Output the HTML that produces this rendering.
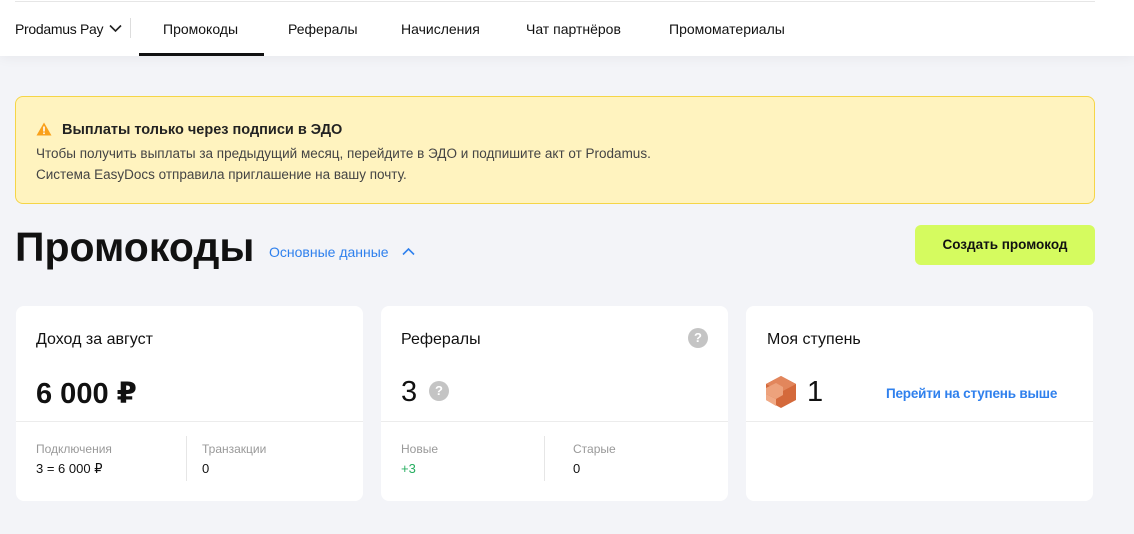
<!DOCTYPE html>
<html><head><meta charset="utf-8"><style>
*{box-sizing:border-box;margin:0;padding:0}
body{width:1134px;height:534px;background:#f3f4f8;font-family:"Liberation Sans","DejaVu Sans",sans-serif;color:#111;position:relative;overflow:hidden}
.hdr{position:absolute;left:0;top:0;width:1134px;height:56px;background:#fff;box-shadow:0 2px 12px rgba(0,0,0,0.05)}
.topline{position:absolute;left:15px;top:1px;width:1080px;height:1px;background:#e6e6e6}
.t{position:absolute;font-size:14px;white-space:nowrap}
.sep{position:absolute;left:130px;top:18px;width:1px;height:20px;background:#ddd}
.ul{position:absolute;left:139px;top:53px;width:125px;height:3px;background:#111}
.alert{position:absolute;left:15px;top:96px;width:1080px;height:108px;background:#fff3bf;border:1px solid #f5d547;border-radius:8px}
.card{position:absolute;top:306px;width:347px;height:195px;background:#fff;border-radius:8px}
.div{position:absolute;left:0;right:0;top:115px;height:1px;background:#ececec}
.vd{position:absolute;top:130px;width:1px;height:45px;background:#e6e6e6}
.q{position:absolute;width:20px;height:20px;border-radius:50%;background:#c4c4c4;color:#fff;font-size:13px;font-weight:bold;text-align:center;line-height:20px}
.small{font-size:12px;color:#999}
</style></head><body>
<div class="hdr"><div class="topline"></div>
<div class="t" style="left:15px;top:21px;letter-spacing:-0.3px">Prodamus Pay</div>
<svg style="position:absolute;left:109px;top:24px" width="13" height="9" viewBox="0 0 13 9"><path d="M1 1.5l5.5 5.5 5.5-5.5" fill="none" stroke="#222" stroke-width="1.6"/></svg>
<div class="sep"></div>
<div class="t" style="left:163px;top:21px">Промокоды</div>
<div class="t" style="left:288px;top:21px">Рефералы</div>
<div class="t" style="left:401px;top:21px">Начисления</div>
<div class="t" style="left:526px;top:21px">Чат партнёров</div>
<div class="t" style="left:669px;top:21px">Промоматериалы</div>
<div class="ul"></div>
</div>
<div class="alert">
<svg style="position:absolute;left:20px;top:25px" width="16" height="14" viewBox="0 0 16 14"><path d="M8 0.5L15.5 13.5H0.5Z" fill="#f9a11b"/><rect x="7.2" y="4.5" width="1.6" height="5" fill="#fff"/><rect x="7.2" y="10.5" width="1.6" height="1.6" fill="#fff"/></svg>
<div class="t" style="left:46px;top:25px;font-weight:bold;font-size:14.5px;color:#222">Выплаты только через подписи в ЭДО</div>
<div class="t" style="left:20px;top:49px;font-size:13.5px;color:#444">Чтобы получить выплаты за предыдущий месяц, перейдите в ЭДО и подпишите акт от Prodamus.</div>
<div class="t" style="left:20px;top:70px;font-size:13.5px;color:#444">Система EasyDocs отправила приглашение на вашу почту.</div>
</div>
<div class="t" style="left:15px;top:224px;font-size:41px;font-weight:bold">Промокоды</div>
<div class="t" style="left:269px;top:244px;font-size:14px;color:#2f80ed">Основные данные</div>
<svg style="position:absolute;left:402px;top:247px" width="13" height="9" viewBox="0 0 13 9"><path d="M1 7.5l5.5-5.5 5.5 5.5" fill="none" stroke="#2f80ed" stroke-width="1.6"/></svg>
<div style="position:absolute;left:915px;top:225px;width:180px;height:40px;background:#d5fb5f;border-radius:6px;font-size:13.5px;font-weight:bold;text-align:center;line-height:40px">Создать промокод</div>

<div class="card" style="left:16px">
<div class="t" style="left:20px;top:25px;font-size:16px">Доход за август</div>
<div class="t" style="left:20px;top:70px;font-size:29px;font-weight:bold">6 000 ₽</div>
<div class="div"></div>
<div class="t small" style="left:20px;top:136px">Подключения</div>
<div class="t" style="left:20px;top:155px;font-size:13px">3 = 6 000 ₽</div>
<div class="vd" style="left:170px"></div>
<div class="t small" style="left:186px;top:136px">Транзакции</div>
<div class="t" style="left:186px;top:155px;font-size:13px">0</div>
</div>
<div class="card" style="left:381px">
<div class="t" style="left:20px;top:25px;font-size:16px">Рефералы</div>
<div class="q" style="left:307px;top:22px">?</div>
<div class="t" style="left:20px;top:70px;font-size:29px">3</div>
<div class="q" style="left:48px;top:75px">?</div>
<div class="div"></div>
<div class="t small" style="left:20px;top:136px">Новые</div>
<div class="t" style="left:20px;top:155px;font-size:13px;color:#27ae60">+3</div>
<div class="vd" style="left:163px"></div>
<div class="t small" style="left:192px;top:136px">Старые</div>
<div class="t" style="left:192px;top:155px;font-size:13px">0</div>
</div>
<div class="card" style="left:746px">
<div class="t" style="left:21px;top:25px;font-size:16px">Моя ступень</div>
<svg style="position:absolute;left:19px;top:69px" width="32" height="34" viewBox="0 0 32 34"><path d="M16 1L31 9V25L16 33L1 25V9Z" fill="#d4693b"/><path d="M1 9L16 1L31 9L16 17Z" fill="#e2865c"/><path d="M1 13L11 8L18 12V20L11 24L1 19Z" fill="#eda27c"/><path d="M1 19L11 24V31L1 25Z" fill="#f0aa86"/></svg>
<div class="t" style="left:61px;top:70px;font-size:29px">1</div>
<div class="t" style="left:140px;top:80px;font-size:13.5px;font-weight:bold;color:#2f80ed;letter-spacing:-0.2px">Перейти на ступень выше</div>
<div class="div"></div>
</div>
</body></html>
